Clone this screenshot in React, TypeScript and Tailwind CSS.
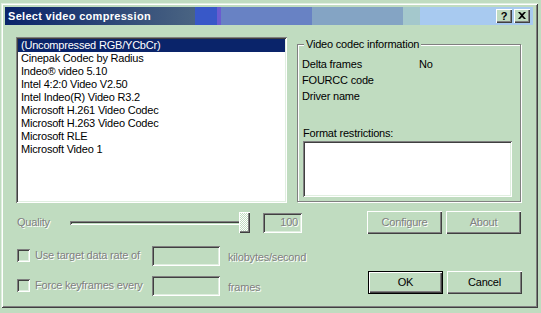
import React from 'react'

const sunken =
  'shadow-[inset_1px_1px_0_#808080,inset_-1px_-1px_0_#ffffff,inset_2px_2px_0_#404040,inset_-2px_-2px_0_#e0efe0]'
const raised =
  'shadow-[inset_1px_1px_0_#ffffff,inset_-1px_-1px_0_#404040,inset_-2px_-2px_0_#808080]'
const disabledText = 'text-[#808080] [text-shadow:1px_1px_0_#ffffff]'

const codecs = [
  '(Uncompressed RGB/YCbCr)',
  'Cinepak Codec by Radius',
  'Indeo® video 5.10',
  'Intel 4:2:0 Video V2.50',
  'Intel Indeo(R) Video R3.2',
  'Microsoft H.261 Video Codec',
  'Microsoft H.263 Video Codec',
  'Microsoft RLE',
  'Microsoft Video 1',
]

const Button = ({ label, enabled = false, isDefault = false }: { label: string; enabled?: boolean; isDefault?: boolean }) => (
  <div
    className={`w-[75px] h-[23px] flex items-center justify-center ${
      isDefault ? 'border border-black' : ''
    }`}
  >
    <div
      className={`w-full h-full flex items-center justify-center ${raised} ${
        enabled ? 'text-black' : disabledText
      }`}
    >
      {label}
    </div>
  </div>
)

const CheckRow = ({ label, unit }: { label: string; unit: string }) => (
  <div className="flex items-center h-[21px]">
    <div className={`ml-[1px] w-[13px] h-[13px] ${sunken}`} />
    <div className={`w-[122px] pl-[5px] ${disabledText}`}>{label}</div>
    <div className={`w-[68px] h-[20px] ${sunken}`} />
    <div className={`ml-[8px] mt-[3px] ${disabledText}`}>{unit}</div>
  </div>
)

export default function App() {
  return (
    <div className="w-[541px] h-[313px] bg-[#c0dcc0] overflow-hidden font-['Liberation_Sans',Arial,sans-serif] text-[11px] leading-[13px] tracking-[-0.2px] text-black">
      <div
        className={`ml-[1px] mt-[3px] w-[537px] h-[305px] p-[4px] shadow-[inset_1px_1px_0_#e0efe0,inset_-1px_-1px_0_#404040,inset_2px_2px_0_#ffffff,inset_-2px_-2px_0_#808080]`}
      >
        {/* title bar */}
        <div className="w-[528px] h-[18px] flex items-center bg-[linear-gradient(to_right,#0a246a_0px,#4a6482_190px,#3858c8_190px,#3858c8_212px,#6a5cd0_212px,#6a5cd0_216px,#6882c4_216px,#6882c4_307px,#84a4c4_307px,#84a4c4_398px,#a4c8cc_398px,#a4c8cc_415px,#a8caf0_415px)]">
          <span className="pl-[3px] text-white font-bold text-[11px] tracking-[0.3px]">Select video compression</span>
          <div className={`ml-auto w-[16px] h-[14px] bg-[#c0dcc0] flex items-center justify-center font-bold text-[11px] ${raised}`}>
            ?
          </div>
          <div className={`ml-[2px] mr-[3px] w-[16px] h-[14px] bg-[#c0dcc0] flex items-center justify-center ${raised}`}>
            <svg width="8" height="7" viewBox="0 0 8 7" className="mb-[1px]">
              <path d="M0 0h2l2 2 2-2h2L5 3.5 8 7H6L4 5 2 7H0l3-3.5z" fill="#000" />
            </svg>
          </div>
        </div>

        <div className="pl-[11px] pr-[12px]">
          {/* top row */}
          <div className="flex mt-[12px]">
            <div className={`w-[271px] h-[166px] bg-white p-[2px] ${sunken}`}>
              {codecs.map((c, i) => (
                <div
                  key={c}
                  className={`h-[13px] pl-[3px] whitespace-nowrap ${
                    i === 0 ? 'bg-[#0a246a] text-white' : ''
                  }`}
                >
                  {c}
                </div>
              ))}
            </div>

            <div className="relative ml-[10px] mt-[7px] w-[224px] h-[158px] border border-[#808080] shadow-[inset_1px_1px_0_#ffffff,1px_1px_0_#ffffff] pl-[4px] pt-[11px]">
              <span className="absolute -top-[7px] left-[6px] px-[2px] bg-[#c0dcc0] leading-[13px]">
                Video codec information
              </span>
              <div className="flex h-[16px] items-center">
                <span className="w-[117px]">Delta frames</span>
                <span>No</span>
              </div>
              <div className="h-[16px] flex items-center">FOURCC code</div>
              <div className="h-[16px] flex items-center">Driver name</div>
              <div className="mt-[23px] pl-[1px] h-[14px]">Format restrictions:</div>
              <div className={`ml-[1px] w-[209px] h-[56px] bg-white ${sunken}`} />
            </div>
          </div>

          {/* quality row */}
          <div className="flex items-center h-[23px] mt-[8px]">
            <span className={`ml-[1px] w-[53px] ${disabledText}`}>Quality</span>
            <div className="relative w-[181px] h-[23px] flex items-center">
              <div className="w-[176px] h-[4px] shadow-[inset_1px_1px_0_#808080,inset_-1px_-1px_0_#ffffff,inset_2px_2px_0_#404040]" />
              <div
                className={`absolute left-[169px] top-[1px] w-[11px] h-[21px] bg-[repeating-conic-gradient(#ffffff_0_25%,#c0dcc0_0_50%)] bg-[length:2px_2px] ${raised}`}
              />
            </div>
            <div className={`ml-[12px] w-[39px] h-[20px] flex items-center justify-end pr-[4px] ${sunken} ${disabledText}`}>
              100
            </div>
            <div className="ml-[65px] flex gap-[4px]">
              <Button label="Configure" />
              <Button label="About" />
            </div>
          </div>

          {/* lower section */}
          <div className="flex mt-[11px]">
            <div className="flex flex-col gap-[9px]">
              <CheckRow label="Use target data rate of" unit="kilobytes/second" />
              <CheckRow label="Force keyframes every" unit="frames" />
            </div>
            <div className="ml-auto mt-[26px] flex gap-[4px]">
              <Button label="OK" enabled isDefault />
              <Button label="Cancel" enabled />
            </div>
          </div>
        </div>
      </div>
    </div>
  )
}
